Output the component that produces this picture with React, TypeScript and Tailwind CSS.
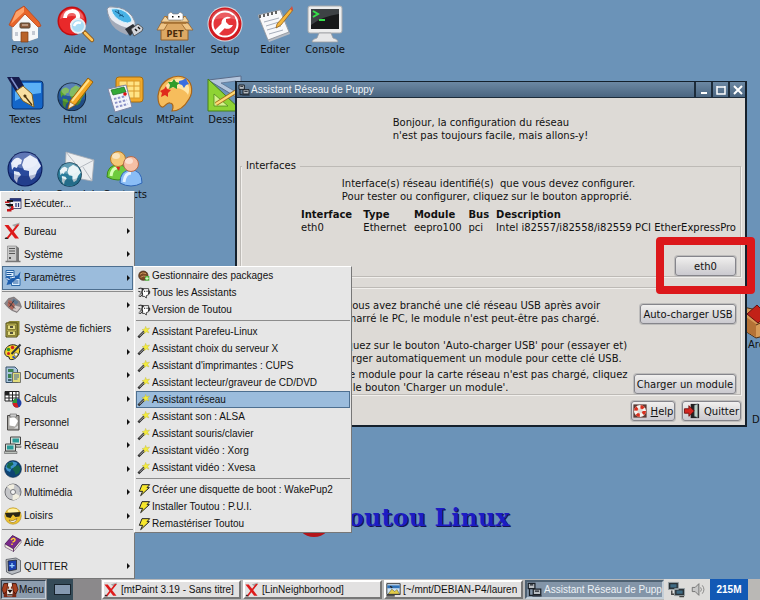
import { useState } from "react";
import type { ReactNode } from "react";

// Shared drawings
const Globe = ({ sea = "#2a4a9c", land = "#e3eaf8", dark = "#0b1c5c" }: { sea?: string; land?: string; dark?: string }) => (
  <g>
    <circle cx="18" cy="18" r="17.5" fill={dark} />
    <circle cx="18" cy="18" r="16.4" fill={sea} />
    <path d="M4 12q4-6 8-5l3 2-1 4-3 1-1 3-3-1-2 3zM7 20l5 1 2 3-3 3-1 5-3-4z" fill={land} />
    <path d="M17 8l6-4 7 4 4 7-4 5-2 6-4 3-2-4v-5l-5-1-2-5z" fill={land} />
    <ellipse cx="18" cy="9.5" rx="13" ry="8" fill="#fff" opacity=".25" />
    <path d="M2 21q16 8 32 0-3 13-16 13T2 21z" fill={dark} opacity=".25" />
  </g>
);

const Palette = () => (
  <g>
    <path d="M26 1c9 3 11 14 6 22-4 7-9 12-17 12 2-4 1-8-2-8-4-1-5 5-8 4-4-2-5-10-3-16C5 5 16-2 26 1z" fill="#f6bd5c" stroke="#a8651a" strokeWidth="1.2" />
    <path d="M25 3c6 2 9 9 6 16-3-6-12-9-24-6C11 5 18 1 25 3z" fill="#ffe6a8" />
    <path d="M3 15l4-2 2-3 1 3 4 1-3 3 0 4-3-2-4 2 1-4z" fill="#e02a1c" />
    <path d="M11 6l4 0 2-3 2 3 4 1-3 2 0 4-4-2-4 2 1-4z" fill="#2f9c2a" />
    <path d="M22 5l4-1 3-2 1 3 2 3-3 1-2 3-2-3-3-1z" fill="#3a6fe0" />
  </g>
);

const Box = () => (
  <g>
    <path d="M4 17h27v17H4z" fill="#dda964" stroke="#94622b" />
    <path d="M4 17L0 24h7l4-7zM31 17l5 7h-7l-5-7z" fill="#efc585" stroke="#94622b" strokeWidth=".8" />
    <path d="M7 10h22v8H7z" fill="#b07b3a" />
    <path d="M4 16l4-6 4 4h12l4-4 4 6z" fill="#f3d39c" stroke="#94622b" strokeWidth=".7" />
    <path d="M11 14V8l3-2 2 2h5l2-2 3 2v6z" fill="#fff" stroke="#777" strokeWidth=".6" />
    <path d="M15 10h1.500v1.500H15zM21 10h1.500v1.500H21z" fill="#111" />
  </g>
);

const icons: Record<string, ReactNode> = {
  house: (
    <>
      <path d="M5 17h25v15l-8 3H7l-2-2z" fill="#e9ebee" stroke="#8f9399" strokeWidth=".7" />
      <path d="M18 8l13 10v14l-9 3H7l-1-1V18z" fill="#f6f7f8" />
      <path d="M17 0L32 16l2 4-3 1L18 8 6 21l-4-2L9 5z" fill="#e8652a" stroke="#b9461a" strokeWidth=".8" />
      <path d="M17 1L9 6 4 18l13-12z" fill="#ffa36b" />
      <rect x="13" y="17" width="10" height="5" rx="1" fill="#8b5a3c" stroke="#543" />
      <path d="M15 19h6" stroke="#e8d4c0" />
      <path d="M14 26h7v10h-7z" fill="#b9632a" stroke="#7c3d14" strokeWidth=".7" />
      <path d="M8 26h3v4H8zM25 25h3v4h-3z" fill="#c5cad3" />
    </>
  ),
  help: (
    <>
      <circle cx="15" cy="15" r="14.500" fill="#c20d10" />
      <circle cx="15" cy="15" r="13" fill="#e9292a" />
      <path d="M8 12c0-9 14-9 13-1 0 4-6 4-6 8" stroke="#fff" strokeWidth="4" fill="none" />
      <path d="M3 13Q5 3 15 3t12 10q-12-6-24 0z" fill="#fff" opacity=".28" />
      <path d="M27 26l8 8" stroke="#8d5a1a" strokeWidth="4.500" strokeLinecap="round" />
      <path d="M28 27l7 7" stroke="#ffc659" strokeWidth="2.500" strokeLinecap="round" />
      <circle cx="21" cy="20" r="7" fill="#a9dcf5" stroke="#e8edf2" strokeWidth="1.800" />
      <path d="M17 20q2-5 7-3" stroke="#fff" strokeWidth="2.500" fill="none" />
    </>
  ),
  usb: (
    <>
      <path d="M0 3Q1 0 6 1q12 0 19 9l3 6q1 6-6 8-8-1-14-5Q1 13 0 3z" fill="#e8ecf3" stroke="#8c94a3" />
      <path d="M1 9q6 10 20 13l6-4-1 6-6 5Q6 24 3 15z" fill="#a3aab8" />
      <path d="M4 3q11-2 18 6 4 5 2 7-3 2-8 0Q6 12 4 3z" fill="#48b2e6" stroke="#d8f2ff" />
      <path d="M8 5l9 6M11 4l1 4M12 10l4-1" stroke="#165a86" />
      <path d="M18 23l8-5 4 5-7 7z" fill="#2b2f35" />
      <path d="M24 23l7-5 5 4-1 3-8 5z" fill="#d2d5db" stroke="#444" strokeWidth=".8" />
      <path d="M28 23l2 2M31 21l2 2" stroke="#111" strokeWidth="1.500" />
    </>
  ),
  box: (
    <>
      <Box />
      <text x="18" y="31" textAnchor="middle" fontSize="8" fontWeight="900" fill="#4a2c0c" className="font-['DejaVu_Sans']">PET</text>
    </>
  ),
  crate: (
    <>
      <path d="M1 5l14 3L26 0l9 8-6 6 5 5-5 13-15 4L3 29V16l-3-5z" fill="#d69b58" stroke="#4b2d14" />
      <path d="M4 15l10 7v13L3 29z" fill="#b47236" />
      <path d="M5 12l10-9 10 10-9 8z" fill="#c22118" stroke="#611" />
      <path d="M14 23l15-7" stroke="#4b2d14" />
    </>
  ),
  setup: (
    <>
      <circle cx="18" cy="18" r="17.500" fill="#d9dde2" />
      <circle cx="18" cy="18" r="16.500" fill="#d11a20" />
      <circle cx="18" cy="18" r="12.500" fill="#e5353a" stroke="#fff" strokeWidth="2" />
      <path d="M9 27l9-9" stroke="#fff" strokeWidth="5.500" />
      <path d="M24 12a6 6 0 1 0 2 7l-4 0-3-3 0-3z" fill="#fff" />
      <path d="M21 15l6-6 2 6-4 3z" fill="#e5353a" />
      <path d="M3 15Q6 3 18 3t15 12q-15-6-30 0z" fill="#fff" opacity=".2" />
    </>
  ),
  notes: (
    <>
      <path d="M1 10L24 4l9 24-21 8z" fill="#b7bcc4" />
      <path d="M1 9L23 4l9 22-21 8z" fill="#f7f8fa" stroke="#8c9098" strokeWidth=".8" />
      <path d="M3 9v3M7 8v3M11 7v3M15 6v3M19 5v3" stroke="#333" strokeWidth="1.500" />
      <path d="M7 16l15-4M9 20l13-4M10 24l14-4M12 28l14-4" stroke="#a6adba" />
      <path d="M20 18L34 2l2 2-12 15-5 3z" fill="#f6b73c" stroke="#97631a" strokeWidth=".8" />
      <path d="M33 3l2-3 1 3-1 2z" fill="#d4513f" />
    </>
  ),
  console: (
    <>
      <rect x="1" y="0" width="34" height="27" rx="2" fill="#eceded" stroke="#a7a9ac" />
      <rect x="4" y="3" width="28" height="20" fill="#17191a" />
      <path d="M4 3h28v5Q16 10 4 19z" fill="#3d4245" />
      <path d="M6 5l5 3-5 3M12 14h6" stroke="#35e04a" strokeWidth="2" fill="none" />
      <path d="M12 27h12l2 5q5 1 5 4H5q0-3 5-4z" fill="#e6e7e8" stroke="#9a9c9f" strokeWidth=".8" />
    </>
  ),
  pen: (
    <>
      <rect x="5" y="5" width="31" height="28" rx="3" fill="#1466c9" stroke="#062f6c" />
      <path d="M8 7h26v10Q20 18 8 25z" fill="#5bb0f5" />
      <path d="M0 1h12l5 9-8 6z" fill="#161b4c" />
      <path d="M4 2l7 11" stroke="#8290cc" strokeWidth="1.500" fill="none" />
      <path d="M9 15l7-5 9 8 2 13-11-6z" fill="#f8dfa1" stroke="#80601e" />
      <path d="M25 29l-8-10" stroke="#4b3510" strokeWidth="1.300" />
      <circle cx="18" cy="20" r="1.500" fill="#4b3510" />
    </>
  ),
  html: (
    <>
      <g transform="translate(0 6) scale(.82)"><Globe sea="#24589c" land="#5aa52e" dark="#14263c" /></g>
      <path d="M13 25L31 2l5 4-17 22-8 5z" fill="#f5a823" stroke="#96600c" />
      <path d="M15 25L32 4" stroke="#ffe08a" strokeWidth="2" />
      <path d="M13 26l5 3-7 4z" fill="#f9e6c4" stroke="#96600c" strokeWidth=".6" />
    </>
  ),
  calc: (
    <>
      <rect x="9" y="1" width="27" height="25" rx="3" fill="#f0a92b" stroke="#a96d0c" />
      <path d="M12 5h21v17H12zM12 10h21M12 15h21M20 5v17M27 5v17" fill="#ffe385" stroke="#d99a2a" />
      <path d="M1 13l18-4 6 22-17 5z" fill="#f2f4fa" stroke="#8187a5" />
      <path d="M4 14l13-3 2 5-13 3z" fill="#33a937" stroke="#1a6b23" strokeWidth=".7" />
      <path d="M7 23l12-3M8 27l12-3M9 31l12-3" stroke="#8c93c8" strokeWidth="2" strokeDasharray="2.500 1.500" />
      <circle cx="18" cy="18" r="1.800" fill="#d11" />
    </>
  ),
  palette: <Palette />,
  draft: (
    <>
      <path d="M1 4L34 0v24z" fill="#b4c5dc" stroke="#5a6c8a" />
      <path d="M14 7l15-2v11z" fill="#6b93b9" stroke="#5a6c8a" strokeWidth=".7" />
      <path d="M1 3v32h34z" fill="#8ed334" stroke="#46801a" />
      <path d="M7 18v12h14z" fill="#d4f38b" stroke="#46801a" strokeWidth=".7" />
      <path d="M9 28L33 13" stroke="#a3701d" strokeWidth="4" />
      <path d="M9 28L33 13" stroke="#ffd873" strokeWidth="2.200" />
    </>
  ),
  globe: <Globe />,
  mail: (
    <>
      <path d="M9 1l28 8-2 21-27-5z" fill="#eceef0" stroke="#a6abb3" strokeWidth=".8" />
      <path d="M9 1l13 16L37 9M8 25l10-11M35 30l-9-14" stroke="#b4b9c0" fill="none" />
      <g transform="translate(0 11) scale(.7)"><Globe sea="#2b7d9b" land="#e4f1f4" dark="#113c52" /></g>
    </>
  ),
  people: (
    <>
      <path d="M0 26q0-12 11-12t11 12q-11 6-22 0z" fill="#6fcb3d" stroke="#3b8a1a" />
      <path d="M4 25q1-8 6-8" stroke="#d8ffb5" strokeWidth="3" fill="none" />
      <circle cx="11" cy="8" r="7.500" fill="#f5c878" stroke="#b97c2a" />
      <ellipse cx="9" cy="5" rx="4" ry="3" fill="#fff" opacity=".5" />
      <path d="M9 16h4l-1 4z" fill="#d22" />
      <path d="M13 32q0-13 11-13t11 13q-11 6-22 0z" fill="#8abdf6" stroke="#2e65b5" />
      <path d="M17 31q1-9 7-9" stroke="#e6f3ff" strokeWidth="3" fill="none" />
      <circle cx="24" cy="13" r="7.500" fill="#f6bfa5" stroke="#b66a4a" />
      <ellipse cx="22" cy="10" rx="4" ry="3" fill="#fff" opacity=".5" />
    </>
  ),
  // Menu icons
  run: (
    <>
      <path d="M12 7h22v20H12z" fill="#f0f0f4" stroke="#557" strokeWidth="2" />
      <path d="M12 7h22v6H12z" fill="#27377c" />
      <path d="M6 10h12v4H6zM2 18h16v5H8z" fill="#151515" />
      <path d="M2 13h9v3H2zM6 28h9v5H6zM14 22h5v8h-5z" fill="#c5161b" />
      <path d="M24 16v8M29 16v8" stroke="#27377c" strokeWidth="2.500" />
    </>
  ),
  x: (
    <>
      <path d="M16 6L32 1l-7 11z" fill="#a5a5a5" />
      <path d="M1 6h8l21 27h-8z" fill="#dd1b1b" />
      <path d="M26 5h5L8 34H3z" fill="#dd1b1b" />
      <path d="M1 34h8l-5-4z" fill="#222" />
    </>
  ),
  tower: (
    <>
      <path d="M8 3h18l4 3v28H8z" fill="#777" />
      <path d="M7 2h18v31H7z" fill="#c9c9c9" stroke="#6a6a6a" />
      <path d="M10 7h12M10 12h12M10 17h12" stroke="#555" strokeWidth="2" />
      <path d="M10 24h4v4h-4z" fill="#555" />
      <path d="M3 33h30" stroke="#777" strokeWidth="3" />
    </>
  ),
  params: (
    <>
      <path d="M4 3h16v12H4zM15 19h17v14H15z" fill="#dbeeff" stroke="#2a68a8" strokeWidth="2" />
      <path d="M2 17l9-2 3 6 5-7 8-1 6-8-2 13-9 4-8 8-9 2 3-8z" fill="#1f5fae" />
      <path d="M5 7h14M5 11h10M18 24h11M18 28h11" stroke="#1c5597" strokeWidth="2" />
      <path d="M5 19l6 2M16 17l6-1" stroke="#fff" strokeWidth="2" />
    </>
  ),
  utils: (
    <>
      <path d="M1 15L9 5l11-3 11 9 4 11-9 11-10-4-8-6z" fill="#8d8588" stroke="#5a5457" />
      <path d="M9 8l10 3 3 10-6 7-9-9z" fill="#b06558" />
      <path d="M19 5l10 7-5 6-8-7z" fill="#5d7890" />
      <path d="M22 19l11 3-7 9-8-3z" fill="#d4c9c6" />
      <path d="M10 13l12 12M20 9L11 22" stroke="#3f3a3e" strokeWidth="2" />
    </>
  ),
  cabinet: (
    <>
      <path d="M5 6l6-4h20v27l-5 5z" fill="#8a8432" />
      <path d="M4 6h22v28H4z" fill="#c9c05a" stroke="#4c4814" strokeWidth="2" />
      <path d="M7 10h16v9H7zM7 22h16v9H7z" fill="#e5dd85" stroke="#6d6722" strokeWidth="1.500" />
      <path d="M12 14h6M12 26h6" stroke="#222" strokeWidth="3" />
    </>
  ),
  paint: (
    <>
      <path d="M22 4c9 2 11 10 8 17-3 8-10 13-17 12-4 0-1-6-5-6-5 0-8-6-6-12C5 6 13 2 22 4z" fill="#f4d62f" stroke="#222" strokeWidth="2" />
      <circle cx="9" cy="13" r="3.500" fill="#2a9b32" />
      <circle cx="17" cy="9" r="3.500" fill="#d2221e" />
      <circle cx="9" cy="21" r="3" fill="#d2221e" />
      <circle cx="24" cy="23" r="3.500" fill="#fff" stroke="#222" />
      <path d="M15 22L33 3" stroke="#30353a" strokeWidth="4" />
      <path d="M17 27l5 3" stroke="#284fc4" strokeWidth="4" />
    </>
  ),
  docs: (
    <>
      <path d="M4 2h18l5 5v26H4z" fill="#a8c4dc" stroke="#35506a" strokeWidth="2" />
      <path d="M8 6h11v6H8zM8 16h7v8H8z" fill="#3d8050" />
      <path d="M17 13h16v20H17z" fill="#e2dc7b" stroke="#555" strokeWidth="1.500" />
      <path d="M20 18h10M20 22h10M20 26h7" stroke="#44679a" strokeWidth="2" />
      <path d="M8 28h7" stroke="#244" strokeWidth="3" />
    </>
  ),
  sheet: (
    <>
      <path d="M2 3h28v19H2z" fill="#fff" />
      <path d="M2 3h28v19H2zM2 10h28M2 16h28M10 3v19M17 3v19M24 3v19" fill="none" stroke="#222" strokeWidth="2" />
      <path d="M2 3h8v7H2z" fill="#222" />
      <circle cx="26" cy="26" r="9" fill="#2140a5" />
      <path d="M26 26V17a9 9 0 0 0-9 9z" fill="#2c9a38" />
      <path d="M26 26h-9a9 9 0 0 0 12 8.500z" fill="#d31f1f" />
    </>
  ),
  clip: (
    <>
      <path d="M7 5h23v29H7z" fill="#a9a7a3" stroke="#4c4a48" strokeWidth="2" />
      <path d="M11 10l9-3 8 9-6 11-11-2z" fill="#fff" />
      <path d="M12 2h13v6H12z" fill="#ccc" stroke="#444" />
      <path d="M20 31l8-6v6z" fill="#ddd" />
    </>
  ),
  net: (
    <>
      <path d="M13 2h20v15H13z" fill="#d9ded9" stroke="#444" strokeWidth="2" />
      <path d="M17 5h13v8H17z" fill="#2a9b98" />
      <path d="M3 16h20v14H3z" fill="#d9ded9" stroke="#444" strokeWidth="2" />
      <path d="M6 19h13v8H6z" fill="#2a9b98" />
      <path d="M1 31h25v4H1zM24 20h10v3H24z" fill="#bcc1bc" stroke="#444" />
    </>
  ),
  earth: (
    <>
      <circle cx="18" cy="18" r="17" fill="#0e4474" stroke="#09233f" />
      <path d="M6 8Q16-1 27 6l-5 9-7 2-3 7-6-3-3-6z" fill="#3f93cc" />
      <path d="M8 6l9-2 2 5-6 4 1 5-5-1-4-3zM20 14l9-4 4 8-3 8-7 4-2-7-4-4z" fill="#17664c" />
    </>
  ),
  cd: (
    <>
      <circle cx="18" cy="18" r="16" fill="#c4c5c8" stroke="#717276" strokeWidth="2" />
      <path d="M18 18L6 7q7-6 15-4zM18 18l14 8q-5 9-15 8z" fill="#f1eee0" />
      <circle cx="18" cy="18" r="5" fill="#f3f3f3" stroke="#77787c" strokeWidth="2" />
      <path d="M24 4l8 6v8" stroke="#8b90a0" strokeWidth="2" fill="none" />
    </>
  ),
  cool: (
    <>
      <circle cx="18" cy="18" r="16.500" fill="#edc22d" stroke="#a27d10" />
      <ellipse cx="18" cy="8" rx="11" ry="5" fill="#fff1a2" />
      <path d="M2 12l31-2-2 9-8 1-5-5-5 7-8-2z" fill="#2b2815" />
      <path d="M10 26q8 4 16-3-2 8-8 8t-8-5z" fill="#fff" stroke="#6b4806" />
    </>
  ),
  book: (
    <>
      <path d="M2 20L17 3l17 9-15 18z" fill="#7b2a8c" stroke="#3b0c48" strokeWidth="1.500" />
      <path d="M2 20v6l17 9V30zM19 30l15-18v5L19 35z" fill="#f3eedc" stroke="#3b0c48" />
      <path d="M14 12q5-6 8-1 0 4-5 5M16 19v3" stroke="#ffcf2e" strokeWidth="3" fill="none" />
    </>
  ),
  quit: (
    <>
      <path d="M4 5l20-3 9 5v22l-17 6-11-5z" fill="#b8bcc2" stroke="#4c5057" strokeWidth="1.500" />
      <path d="M8 8l17-2v19l-16 3z" fill="#1b3fae" stroke="#222" strokeWidth="1.500" />
      <path d="M16 12v10M11 17h10" stroke="#9cd2ff" strokeWidth="2.500" />
    </>
  ),
  pets: (
    <>
      <circle cx="16" cy="17" r="14" fill="#7a4a26" stroke="#3a2210" strokeWidth="2" />
      <path d="M6 13q8-8 18-2M8 22q7-6 16-3" stroke="#c8945c" strokeWidth="3" fill="none" />
      <path d="M22 18h12v14H20z" fill="#4fae3c" />
      <path d="M27 20v10M22 25h10" stroke="#e6ffd8" strokeWidth="3" />
    </>
  ),
  puppy: (
    <>
      <path d="M12 5h20v18l-7 3v7l-6-5h-6z" fill="#fff" stroke="#222" strokeWidth="2.500" />
      <path d="M1 5l9-2 5 6-4 6 3 7-5 6-7-1M1 13l7 2M5 22l5-2M13 4l5 4M30 12h5v7h-5" fill="none" stroke="#222" strokeWidth="3" />
      <path d="M20 11v4M27 11v4" stroke="#222" strokeWidth="3" />
    </>
  ),
  wand: (
    <>
      <path d="M1 34L19 16" stroke="#222" strokeWidth="7" />
      <path d="M4 31L19 16" stroke="#d8d8d8" strokeWidth="2.500" />
      <path d="M23 1l3 7 9-2-6 7 4 8-8-3-6 5v-8l-7-4 8-2z" fill="#f4ec3c" stroke="#b3ab2a" />
    </>
  ),
  bolt: <path d="M12 2h23l-8 9h7L8 35l6-13H4z" fill="#f7e72c" stroke="#222" strokeWidth="3" />,
  // Title bar, taskbar and dialog icons
  hosts: (
    <>
      <path d="M3 3h16v13H3zM15 17h18v13H15z" fill="#b8bdc2" stroke="#1b2128" strokeWidth="3" />
      <path d="M7 7h8M19 22h10M6 16v16h8M13 33h22" stroke="#1b2128" strokeWidth="3" fill="none" />
    </>
  ),
  dog: (
    <>
      <path d="M4 3h28v31H4z" fill="#7c2814" />
      <path d="M14 2h8l3 13-2 17H12L11 15z" fill="#f5efe8" />
      <path d="M4 4l9-1-2 17-7 7L0 17zM32 4l-9-1 2 17 6 7 5-10z" fill="#a8401e" stroke="#2e0c06" strokeWidth="1.500" />
      <path d="M12 10h4v5h-4zM20 10h4v5h-4z" fill="#8a3518" />
      <path d="M15 19h6l-3 4zM12 29h12" stroke="#1c0b06" strokeWidth="3" fill="#1c0b06" />
    </>
  ),
  files: (
    <>
      <path d="M2 4h32v26H2z" fill="#cfe4f5" stroke="#222" strokeWidth="2" />
      <path d="M3 8h30v7H3z" fill="#2f72b8" />
      <path d="M5 29l9-12 7 6 5-5 7 11z" fill="#e2cc48" stroke="#333" />
      <path d="M1 33h20M10 10l5 4" stroke="#222" strokeWidth="3" />
    </>
  ),
  tray: (
    <>
      <path d="M1 3h21v15H1zM14 16h21v15H14z" fill="#2a3136" stroke="#96a0a5" strokeWidth="2" />
      <path d="M5 7h13v7H5zM18 20h13v7H18z" fill="#3e6a83" />
      <path d="M8 20v8h5M24 33h10" stroke="#444" strokeWidth="3" fill="none" />
    </>
  ),
  speaker: (
    <>
      <path d="M3 13h7l9-9v28l-9-9H3z" fill="#c8c8c8" stroke="#666" strokeWidth="2" />
      <path d="M23 13q4 5 0 10M27 8q8 10 0 20" stroke="#777" strokeWidth="2" fill="none" />
    </>
  ),
  buoy: (
    <>
      <path d="M1 1h34v34H1z" fill="#5c3b35" />
      <circle cx="18" cy="18" r="11" fill="#dddad6" stroke="#f7f4f0" strokeWidth="9" />
      <circle cx="18" cy="18" r="11" fill="none" stroke="#d8301f" strokeWidth="9" strokeDasharray="8.640 8.640" />
    </>
  ),
  exit: (
    <>
      <path d="M15 2h19v32H15z" fill="#222" />
      <path d="M23 5l8-3v31l-8-3z" fill="#b9d0c5" stroke="#445" />
      <path d="M1 13h10V6l12 12-12 12v-7H1z" fill="#d32620" stroke="#6d0f0c" strokeWidth="2" />
    </>
  ),
};

const Icon = ({ name, className }: { name: string; className: string }) => (
  <svg viewBox="0 0 36 36" className={`shrink-0 overflow-visible ${className}`} aria-hidden="true">
    {icons[name]}
  </svg>
);

const desktopRows = [
  [["Perso", "house"], ["Aide", "help"], ["Montage", "usb"], ["Installer", "box"], ["Setup", "setup"], ["Editer", "notes"], ["Console", "console"]],
  [["Textes", "pen"], ["Html", "html"], ["Calculs", "calc"], ["MtPaint", "palette"], ["Dessin", "draft"]],
  [["Web", "globe"], ["Courriel", "mail"], ["Contacts", "people"]],
];

// [label, icon, has a submenu]
const mainMenu: [string, string, boolean][][] = [
  [["Exécuter...", "run", false]],
  [["Bureau", "x", true], ["Système", "tower", true], ["Paramètres", "params", true]],
  [
    ["Utilitaires", "utils", true],
    ["Système de fichiers", "cabinet", true],
    ["Graphisme", "paint", true],
    ["Documents", "docs", true],
    ["Calculs", "sheet", true],
    ["Personnel", "clip", true],
    ["Réseau", "net", true],
    ["Internet", "earth", true],
    ["Multimédia", "cd", true],
    ["Loisirs", "cool", true],
  ],
  [["Aide", "book", false], ["QUITTER", "quit", true]],
];

const subMenu: [string, string][][] = [
  [["Gestionnaire des packages", "pets"], ["Tous les Assistants", "puppy"], ["Version de Toutou", "puppy"]],
  [
    ["Assistant Parefeu-Linux", "wand"],
    ["Assistant choix du serveur X", "wand"],
    ["Assistant d'imprimantes : CUPS", "wand"],
    ["Assistant lecteur/graveur de CD/DVD", "wand"],
    ["Assistant réseau", "wand"],
    ["Assistant son : ALSA", "wand"],
    ["Assistant souris/clavier", "wand"],
    ["Assistant vidéo : Xorg", "wand"],
    ["Assistant vidéo : Xvesa", "wand"],
  ],
  [["Créer une disquette de boot : WakePup2", "bolt"], ["Installer Toutou : P.U.I.", "bolt"], ["Remastériser Toutou", "bolt"]],
];

const tasks = [
  { label: "[mtPaint 3.19 - Sans titre]", icon: "x" },
  { label: "[LinNeighborhood]", icon: "x" },
  { label: "[~/mnt/DEBIAN-P4/lauren", icon: "files" },
  { label: "Assistant Réseau de Pupp", icon: "hosts" },
];

const Shortcut = ({ label, icon }: { label: string; icon: string }) => (
  <button type="button" className="flex w-[50px] flex-col items-center gap-px text-[10px] leading-[14px] whitespace-nowrap">
    <Icon name={icon} className="size-9" />
    {label}
  </button>
);

const GtkButton = ({ children, className = "" }: { children: ReactNode; className?: string }) => (
  <button
    type="button"
    className={`flex h-5 items-center justify-center gap-1 rounded-[3px] border border-[#85858b] bg-linear-to-b from-[#f1f0ef] via-[#dcdbdc] to-[#cbcad0] whitespace-nowrap shadow-[0_0_0_1px_#bdbcbb] ${className}`}
  >
    {children}
  </button>
);

const MainMenu = () => {
  const [active, setActive] = useState("Paramètres");
  return (
    <nav className="absolute top-[191px] bottom-[21px] left-0 flex w-[135px] flex-col border border-t-white border-r-[#777] border-b-[#777] border-l-white bg-[#e6e6e6] px-px">
      {mainMenu.map((group, i) => (
        <div key={i} className="contents">
          {i > 0 && (
            <div className="flex h-1 items-center">
              <hr className="w-full border-[#8c8c8c]" />
            </div>
          )}
          {group.map(([label, icon, hasSub]) => (
            <button
              key={label}
              type="button"
              onClick={() => setActive(label)}
              className={`flex min-h-0 flex-1 items-center gap-[2px] border px-px text-left ${
                active === label ? "border-[#4d6f90] bg-[#9bbcdc]" : "border-transparent"
              }`}
            >
              <Icon name={icon} className="size-[18px]" />
              <span className="flex-1 whitespace-nowrap">{label}</span>
              {hasSub && (
                <svg viewBox="0 0 4 8" className="h-2 w-1" aria-hidden="true">
                  <path d="M0 1l3 3-3 3z" fill="#111" />
                </svg>
              )}
            </button>
          ))}
        </div>
      ))}
    </nav>
  );
};

const SubMenu = () => {
  const [active, setActive] = useState("Assistant réseau");
  return (
    <nav className="absolute top-[266px] left-[134px] w-[218px] border border-t-white border-r-[#777] border-b-[#777] border-l-white bg-[#e6e6e6] px-px">
      {subMenu.map((group, i) => (
        <div key={i}>
          {i > 0 && (
            <div className="flex h-[5px] items-center">
              <hr className="w-full border-[#8c8c8c]" />
            </div>
          )}
          {group.map(([label, icon]) => (
            <button
              key={label}
              type="button"
              onClick={() => setActive(label)}
              className={`flex h-[17px] w-full items-center gap-[2px] border px-px text-left whitespace-nowrap ${
                active === label ? "border-[#4d6f90] bg-[#9bbcdc]" : "border-transparent"
              }`}
            >
              <Icon name={icon} className="size-3" />
              {label}
            </button>
          ))}
        </div>
      ))}
    </nav>
  );
};

const NetworkWindow = () => (
  <section className="absolute top-[81px] left-[235px] w-[512px] border-2 border-t border-[#14202c] bg-[#dddad6] text-[10px] leading-[13px]">
    <header className="flex h-4 items-stretch border-b border-[#1d2c3a] bg-linear-to-b from-[#6c88a3] to-[#4b6681] font-['Liberation_Sans',sans-serif] text-[#edf3f8]">
      <Icon name="hosts" className="mx-px size-3 self-center" />
      <h1 className="flex-1 self-center">Assistant Réseau de Puppy</h1>
      {["Réduire", "Agrandir", "Fermer"].map((label, i) => (
        <button key={label} type="button" aria-label={label} className="flex w-[17px] items-center justify-center border-l-2 border-[#1d2c3a]">
          <svg viewBox="0 0 10 10" className="size-[10px]" fill="none" stroke="#fff" strokeWidth="2" aria-hidden="true">
            {i === 0 && <path d="M2 8h6" />}
            {i === 1 && <path d="M1 2h8M1 1v8h8V1" strokeWidth="1.500" />}
            {i === 2 && <path d="M1 1l8 8M9 1L1 9" />}
          </svg>
        </button>
      ))}
    </header>

    <div className="pt-[18px] pr-1 pb-1 pl-[3px]">
      <p className="mx-auto w-fit">
        Bonjour, la configuration du réseau
        <br />
        n'est pas toujours facile, mais allons-y!
      </p>

      <fieldset className="mt-[17px] min-w-0 border border-[#bdbab6] pr-1 shadow-[inset_1px_0_#f1efec,1px_1px_#f1efec]">
        <legend className="ml-px px-1 leading-[14px]">Interfaces</legend>
        <p className="mx-auto w-fit pt-1 whitespace-pre-wrap">
          Interface(s) réseau identifié(s){"  "}que vous devez configurer.
          <br />
          Pour tester ou configurer, cliquez sur le bouton approprié.
        </p>
        <table className="mt-[5px] ml-[60px] text-left whitespace-nowrap">
          <thead>
            <tr>
              <th className="w-[63px] p-0">Interface</th>
              <th className="w-[51px] p-0">Type</th>
              <th className="w-[55px] p-0">Module</th>
              <th className="w-[28px] p-0">Bus</th>
              <th className="p-0">Description</th>
            </tr>
          </thead>
          <tbody>
            <tr>
              <td className="p-0">eth0</td>
              <td className="p-0">Ethernet</td>
              <td className="p-0">eepro100</td>
              <td className="p-0">pci</td>
              <td className="p-0">Intel i82557/i82558/i82559 PCI EtherExpressPro</td>
            </tr>
          </tbody>
        </table>
        <GtkButton className="mt-[22px] ml-auto w-[61px]">eth0</GtkButton>
      </fieldset>

      <fieldset className="mt-[10px] min-w-0 border border-[#bdbab6] pt-[11px] pr-1 shadow-[inset_1px_1px_#f1efec,1px_1px_#f1efec]">
        <div className="flex justify-end">
          <div className="w-[300px] whitespace-nowrap">
            <p>
              Si vous avez branché une clé réseau USB après avoir
              <br />
              démarré le PC, le module n'est peut-être pas chargé.
            </p>
            <p className="mt-[14px]">
              Cliquez sur le bouton 'Auto-charger USB' pour (essayer et)
              <br />
              charger automatiquement un module pour cette clé USB.
            </p>
          </div>
          <div className="flex w-[102px] items-start justify-end pt-[5px]">
            <GtkButton className="w-24">Auto-charger USB</GtkButton>
          </div>
        </div>
        <div className="mt-[3px] flex items-end justify-end">
          <p className="w-[300px] whitespace-nowrap">
            Si le module pour la carte réseau n'est pas chargé, cliquez
            <br />
            sur le bouton 'Charger un module'.
          </p>
          <GtkButton className="w-[102px]">Charger un module</GtkButton>
        </div>
      </fieldset>

      <div className="mt-[6px] flex justify-end gap-[7px]">
        <GtkButton className="w-11">
          <Icon name="buoy" className="size-[14px]" />
          <span><u>H</u>elp</span>
        </GtkButton>
        <GtkButton className="w-[59px]">
          <Icon name="exit" className="size-4" />
          Quitter
        </GtkButton>
      </div>
    </div>
  </section>
);

const Taskbar = () => (
  <footer className="relative flex h-[21px] items-stretch bg-[#8b898b] font-['Liberation_Sans',sans-serif]">
    <button type="button" className="m-px flex w-[45px] items-center gap-px border border-[#33414e] border-r-[#c4cfd8] border-b-[#c4cfd8] bg-[#8c9cad]">
      <Icon name="dog" className="size-4" />
      Menu
    </button>
    <div className="flex w-[26px] items-center justify-end bg-[#354b58] pr-[2px]">
      <div className="h-[11px] w-[17px] border border-[#16222b] bg-[#8599b0]" />
    </div>
    <div className="ml-7 flex min-w-0 flex-1 items-stretch gap-[2px] bg-[#b9b9b9] py-px pl-px">
      {tasks.map(({ label, icon }, i) => (
        <button
          key={label}
          type="button"
          className={`flex min-w-0 flex-1 items-center gap-[2px] overflow-hidden border-2 whitespace-nowrap ${
            i === 3 ? "border-[#4e6172] border-r-[#c4cfd8] border-b-[#c4cfd8] bg-[#8395a8] text-[#edf2f6]" : "border-white border-r-[#777] border-b-[#777] bg-[#e2e1e1]"
          }`}
        >
          <Icon name={icon} className="size-[15px]" />
          <span className="min-w-0 overflow-hidden">{label}</span>
        </button>
      ))}
    </div>
    <div className="flex w-[46px] items-center justify-center gap-[6px] bg-[#dddcda]">
      <Icon name="tray" className="size-[17px]" />
      <Icon name="speaker" className="size-[15px]" />
    </div>
    <div className="flex w-[38px] items-center justify-center bg-[#1259b5] font-bold text-white">215M</div>
    <div className="w-3 bg-[#bab8b5]" />
  </footer>
);

export default function App() {
  return (
    <div className="relative flex h-screen flex-col overflow-hidden bg-[#6b93b8] font-['DejaVu_Sans',sans-serif] text-[10px] leading-[13px] text-[#111]">
      <main className="min-h-0 flex-1 pt-[6px]">
        {desktopRows.map((row, i) => (
          <div key={i} className={i === 2 ? "mt-6 flex" : "mb-[19px] flex"}>
            {row.map(([label, icon]) => (
              <Shortcut key={label} label={label} icon={icon} />
            ))}
          </div>
        ))}
      </main>

      {/* Wallpaper logo */}
      <div className="absolute top-[501px] left-[296px] size-9 rounded-full bg-[#b3141a]" />
      <p className="absolute top-[504px] left-[333px] font-['DejaVu_Serif',serif] text-[24px] leading-7 font-bold whitespace-nowrap text-[#1c1cc4] [text-shadow:1px_1px_#15154f]">
        Toutou Linux
      </p>

      {/* Shortcuts at the right edge */}
      <div className="absolute top-[302px] left-[742px]">
        <Icon name="crate" className="size-9" />
        <p className="pl-[6px]">Arc</p>
      </div>
      <p className="absolute top-[413px] left-[752px]">D</p>

      <NetworkWindow />
      <div className="absolute top-[237px] left-[656px] h-[57px] w-[99px] rounded-[4px] border-8 border-[#dc181b]" />

      <div className="font-['Liberation_Sans',sans-serif]">
        <MainMenu />
        <SubMenu />
      </div>
      <Taskbar />
    </div>
  );
}
